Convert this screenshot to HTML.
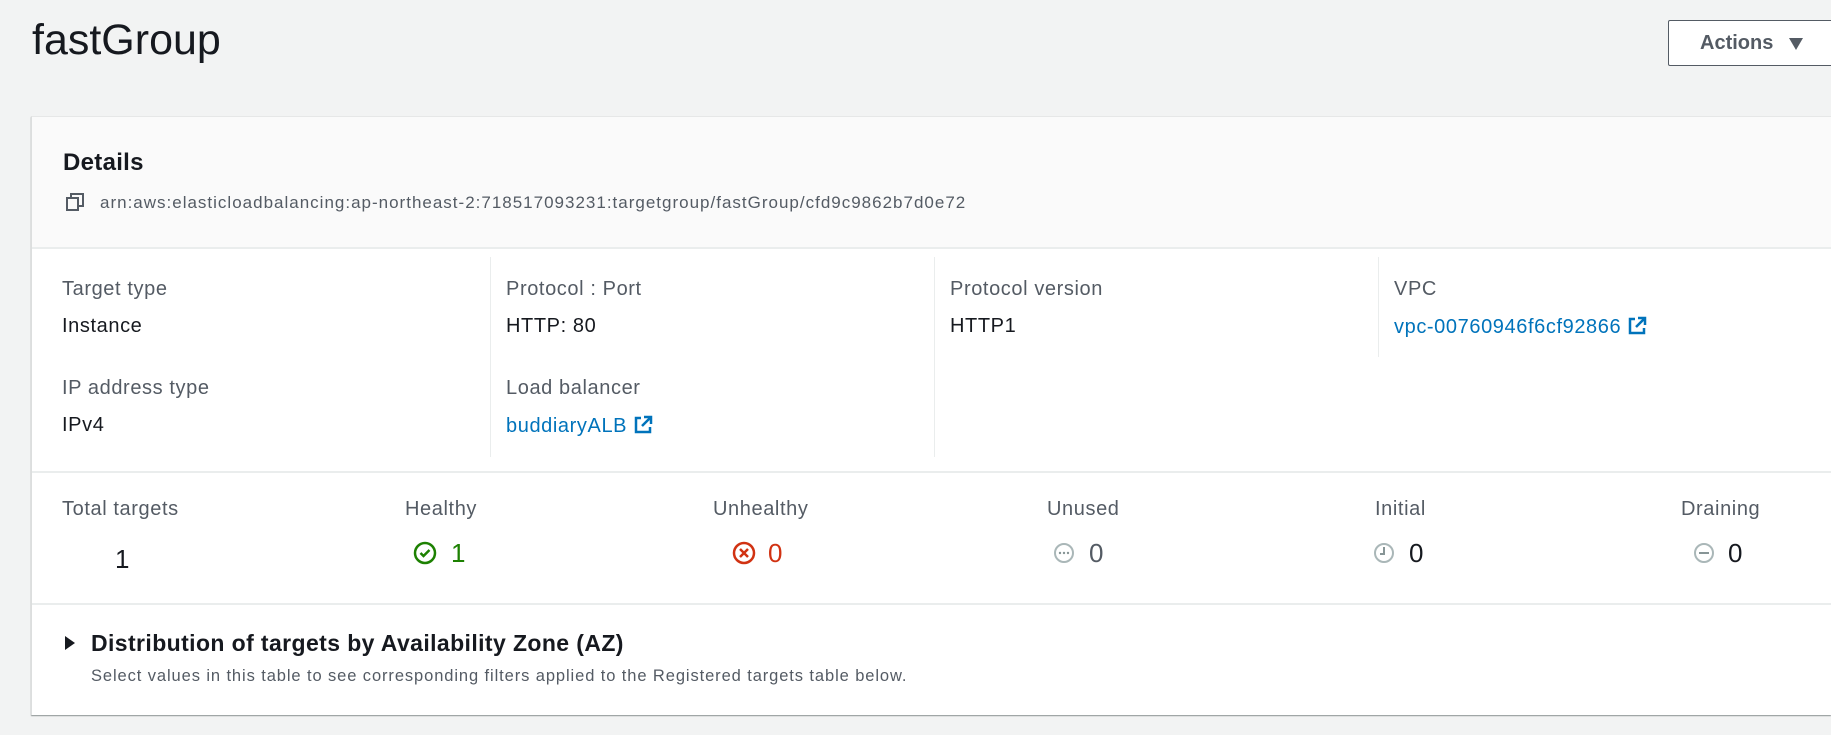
<!DOCTYPE html>
<html><head><meta charset="utf-8"><style>
body{margin:0;width:1831px;height:735px;background:#f2f3f3;font-family:"Liberation Sans",Arial,sans-serif;position:relative;overflow:hidden;color:#16191f}
.a{position:absolute;white-space:nowrap;line-height:1}
.lbl{font-size:20px;color:#545b64;letter-spacing:0.6px}
.val{font-size:20px;color:#16191f;letter-spacing:0.6px}
.lnk{font-size:20px;color:#0073bb;letter-spacing:0.6px}
.num{font-size:26px}
.vd{position:absolute;width:1px;background:#eaeded}
.hd{position:absolute;left:32px;right:0;height:2px;background:#eaeded}
</style></head><body>
<div class="a" style="left:32px;top:19px;font-size:43px;color:#16191f">fastGroup</div>
<div class="a" style="left:1668px;top:20px;width:180px;height:46px;border:1px solid #545b64;border-radius:2px;background:#fff;box-sizing:border-box"></div>
<div class="a" style="left:1700px;top:33px;font-size:20px;font-weight:bold;color:#545b64">Actions</div>
<svg class="a" style="left:1788px;top:37px" width="16" height="14"><path d="M1 1h14L8 13z" fill="#545b64"/></svg>

<div class="a" style="left:31px;top:116px;right:0;height:598px;background:#fff;border-left:1px solid #dcdede;border-top:1px solid #e6e7e7;box-shadow:0 1px 1px #8d9393"></div>
<div class="a" style="left:32px;top:117px;right:0;height:131px;background:#fafafa"></div>
<div class="hd" style="top:247px"></div>
<div class="a" style="left:63px;top:151px;font-size:24px;font-weight:bold;letter-spacing:0.3px">Details</div>
<svg class="a" style="left:65px;top:192px" width="20" height="20"><rect x="6" y="2" width="12" height="12" fill="none" stroke="#545b64" stroke-width="2"/><rect x="2" y="6" width="11" height="12" fill="#fafafa" stroke="#545b64" stroke-width="2"/></svg>
<div class="a" style="left:100px;top:194px;font-size:17px;letter-spacing:1px;color:#545b64">arn:aws:elasticloadbalancing:ap-northeast-2:718517093231:targetgroup/fastGroup/cfd9c9862b7d0e72</div>

<div class="vd" style="left:490px;top:257px;height:200px"></div>
<div class="vd" style="left:934px;top:257px;height:200px"></div>
<div class="vd" style="left:1378px;top:257px;height:100px"></div>

<div class="a lbl" style="left:62px;top:279px">Target type</div>
<div class="a val" style="left:62px;top:316px">Instance</div>
<div class="a lbl" style="left:62px;top:378px">IP address type</div>
<div class="a val" style="left:62px;top:415px">IPv4</div>
<div class="a lbl" style="left:506px;top:279px">Protocol : Port</div>
<div class="a val" style="left:506px;top:316px">HTTP: 80</div>
<div class="a lbl" style="left:506px;top:378px">Load balancer</div>
<div class="a lnk" style="left:506px;top:415px">buddiaryALB <svg width="20" height="20" style="vertical-align:-3px;margin-left:0px"><path d="M8 3H3v14h14v-5M11 2h7v7M18 2l-9 9" fill="none" stroke="#0073bb" stroke-width="2.5"/></svg></div>
<div class="a lbl" style="left:950px;top:279px">Protocol version</div>
<div class="a val" style="left:950px;top:316px">HTTP1</div>
<div class="a lbl" style="left:1394px;top:279px">VPC</div>
<div class="a lnk" style="left:1394px;top:316px">vpc-00760946f6cf92866 <svg width="20" height="20" style="vertical-align:-3px;margin-left:0px"><path d="M8 3H3v14h14v-5M11 2h7v7M18 2l-9 9" fill="none" stroke="#0073bb" stroke-width="2.5"/></svg></div>

<div class="hd" style="top:471px"></div>
<div class="a lbl" style="left:62px;top:499px">Total targets</div>
<div class="a lbl" style="left:405px;top:499px">Healthy</div>
<div class="a lbl" style="left:713px;top:499px">Unhealthy</div>
<div class="a lbl" style="left:1047px;top:499px">Unused</div>
<div class="a lbl" style="left:1375px;top:499px">Initial</div>
<div class="a lbl" style="left:1681px;top:499px">Draining</div>

<div class="a num" style="left:115px;top:546px">1</div>
<svg class="a" style="left:413px;top:541px" width="24" height="24"><circle cx="12" cy="12" r="10" fill="none" stroke="#1d8102" stroke-width="2.5"/><path d="M7.5 12l3 3 6-6" fill="none" stroke="#1d8102" stroke-width="2.5"/></svg>
<div class="a num" style="left:451px;top:540px;color:#1d8102">1</div>
<svg class="a" style="left:732px;top:541px" width="24" height="24"><circle cx="12" cy="12" r="10" fill="none" stroke="#d13212" stroke-width="2.5"/><path d="M8 8l8 8M16 8l-8 8" stroke="#d13212" stroke-width="2.5"/></svg>
<div class="a num" style="left:768px;top:540px;color:#d13212">0</div>
<svg class="a" style="left:1053px;top:542px" width="22" height="22"><circle cx="11" cy="11" r="9" fill="none" stroke="#aab7b8" stroke-width="2"/><circle cx="7" cy="11" r="1.2" fill="#879596"/><circle cx="11" cy="11" r="1.2" fill="#879596"/><circle cx="15" cy="11" r="1.2" fill="#879596"/></svg>
<div class="a num" style="left:1089px;top:540px;color:#545b64">0</div>
<svg class="a" style="left:1373px;top:542px" width="22" height="22"><circle cx="11" cy="11" r="9" fill="none" stroke="#aab7b8" stroke-width="2"/><path d="M11 5v7H7" fill="none" stroke="#879596" stroke-width="2"/></svg>
<div class="a num" style="left:1409px;top:540px">0</div>
<svg class="a" style="left:1693px;top:542px" width="22" height="22"><circle cx="11" cy="11" r="9" fill="none" stroke="#aab7b8" stroke-width="2"/><path d="M6 11h10" stroke="#879596" stroke-width="2"/></svg>
<div class="a num" style="left:1728px;top:540px">0</div>

<div class="hd" style="top:603px"></div>
<svg class="a" style="left:64px;top:635px" width="12" height="16"><path d="M1 1l10 7-10 7z" fill="#16191f"/></svg>
<div class="a" style="left:91px;top:632px;font-size:23px;letter-spacing:0.4px;font-weight:bold">Distribution of targets by Availability Zone (AZ)</div>
<div class="a" style="left:91px;top:668px;font-size:16.5px;letter-spacing:0.9px;color:#545b64">Select values in this table to see corresponding filters applied to the Registered targets table below.</div>
</body></html>
